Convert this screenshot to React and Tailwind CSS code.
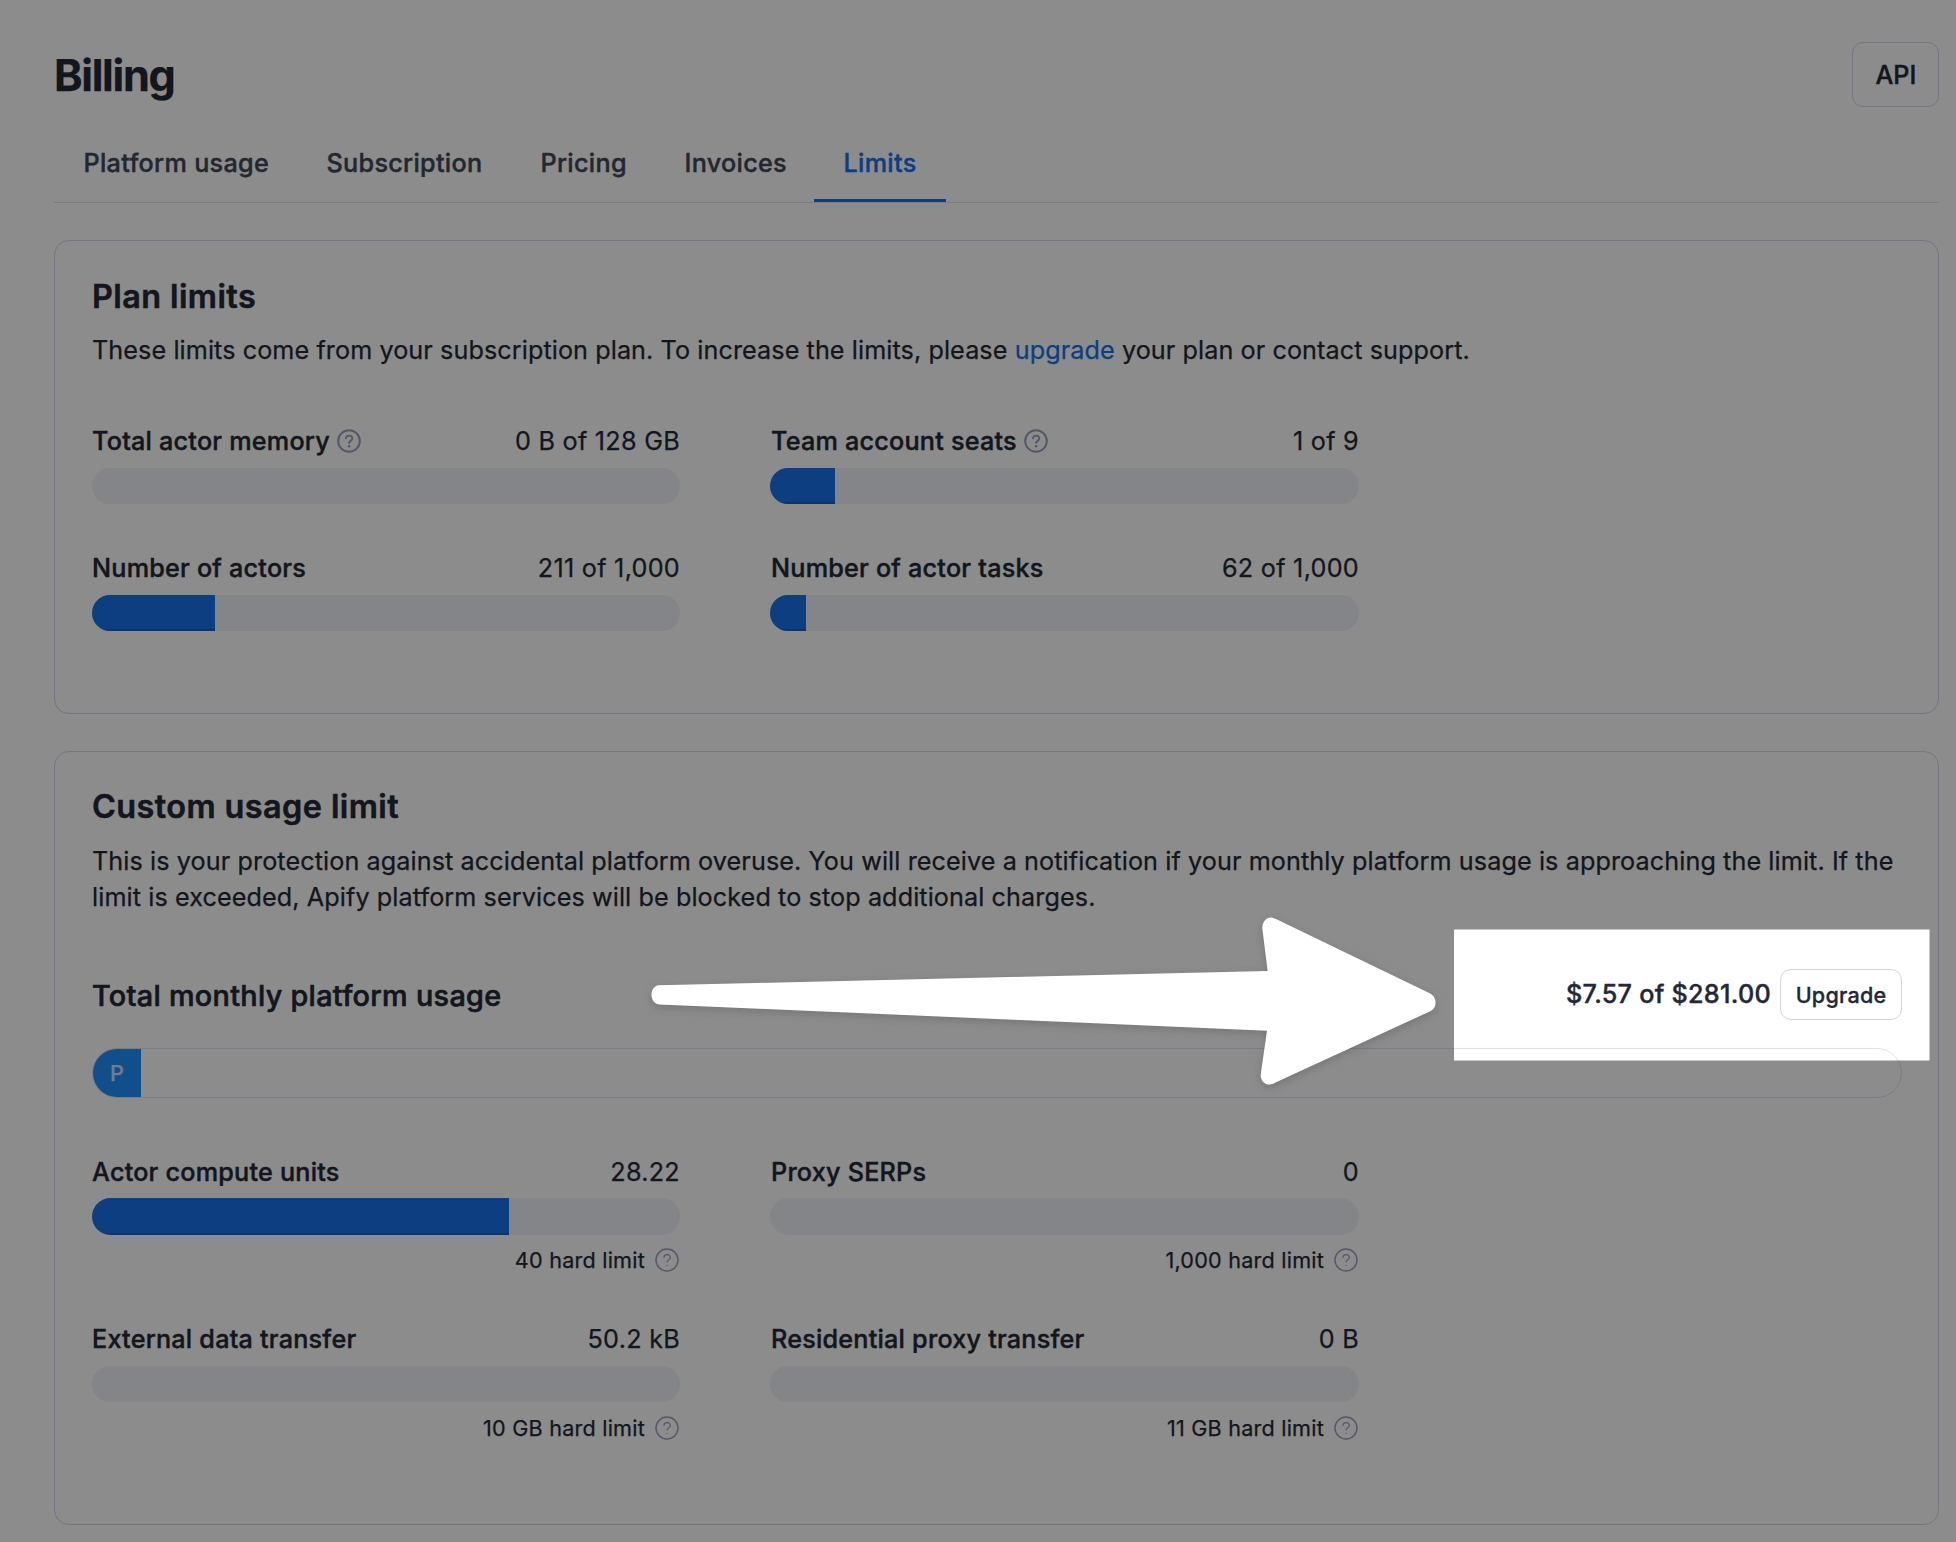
import React from "react";

const tabs = [
  { label: "Platform usage", width: "w-[243px]" },
  { label: "Subscription", width: "w-[214px]" },
  { label: "Pricing", width: "w-[144px]" },
  { label: "Invoices", width: "w-[159px]" },
  { label: "Limits", width: "w-[132px]", active: true },
];

function HelpIcon({ thin = false }) {
  return (
    <svg className="h-6 w-6 shrink-0" viewBox="0 0 24 24" fill="none" stroke="#979ebd" strokeLinecap="round">
      <circle cx="12" cy="12" r={thin ? 11 : 10.8} strokeWidth={thin ? 1.4 : 2} />
      <path
        d="M8.900 9.300c.3-1.700 1.600-2.700 3.200-2.700 1.800 0 3.200 1.100 3.200 2.900 0 2.200-3.200 2.500-3.200 4.500"
        strokeWidth={thin ? 1.2 : 1.9}
      />
      <circle cx="12.100" cy="17.300" r={thin ? 0.6 : 1.2} fill="#979ebd" stroke="none" />
    </svg>
  );
}

function Track({ fill = 0, height = "h-9" }) {
  return (
    <div className={`w-full overflow-hidden rounded-full bg-[#f0f2f9] ${height}`}>
      {fill > 0 && (
        <div className="h-full bg-[#1672eb] shadow-[inset_0_-2px_0_rgba(0,0,0,0.15)]" style={{ width: `${fill}px` }} />
      )}
    </div>
  );
}

function Meter({ label, value, help, fill, gap = "mt-[9px]", height, width, pad = "", limit, limitGap }) {
  return (
    <div className={width}>
      <div className={`flex h-9 items-center justify-between leading-9 ${pad}`}>
        <div className="flex items-center gap-[7px]">
          <span className="font-medium tracking-[0.22px] [-webkit-text-stroke:0.4px]">{label}</span>
          {help && <HelpIcon />}
        </div>
        <span className="tracking-[0.27px]">{value}</span>
      </div>
      <div className={gap}>
        <Track fill={fill} height={height} />
      </div>
      {limit && (
        <div className={`flex h-[30px] items-center justify-end gap-[10px] pr-px text-[21.6px] leading-[30px] tracking-[0.22px] ${limitGap}`}>
          <span>{limit}</span>
          <HelpIcon thin />
        </div>
      )}
    </div>
  );
}

function Card({ title, className, children }) {
  return (
    <section className={`rounded-[15px] border border-[#d5d3ec] pr-9 pl-[37px] ${className}`}>
      <h2 className="text-[32.4px] leading-[45px] font-semibold tracking-[0.42px] [-webkit-text-stroke:0.5px]">{title}</h2>
      {children}
    </section>
  );
}

const left = "w-[588px]";
const right = "ml-[90px] w-[589px]";

export default function App() {
  return (
    <div className="relative h-[1542px] w-[1956px] overflow-hidden bg-white pt-[42px] pr-[17px] pl-[54px] font-[Inter,sans-serif] text-[25.2px] text-[#242836] [-webkit-text-stroke:0.25px]">
      <header className="flex h-[65px] items-center justify-between">
        <h1 className="text-[43.2px] leading-[54px] font-bold tracking-[-1.3px]">Billing</h1>
        <button className="flex h-[65px] w-[87px] items-center justify-center rounded-[11px] border border-[#d5d3ec] pt-[2px] pl-px font-medium tracking-[0.1px] [-webkit-text-stroke:0.4px]">
          API
        </button>
      </header>

      <nav className="mt-[38px] flex h-[58px] border-b border-[#e0def2] leading-9 font-medium tracking-[0.3px] text-[#414758] [-webkit-text-stroke:0.4px]">
        {tabs.map((t) => (
          <div key={t.label} className={`${t.width} h-[57px] pl-[29.5px] ${t.active ? "border-b-[3px] border-[#1672eb] text-[#1672eb]" : ""}`}>
            {t.label}
          </div>
        ))}
      </nav>

      <Card title="Plan limits" className="mt-[37px] h-[474px] pt-[33px]">
        <p className="mt-[13px] leading-9 tracking-[0.08px]">
          These limits come from your subscription plan. To increase the limits, please{" "}
          <a className="text-[#1672eb]">upgrade</a> your plan or contact support.
        </p>
        <div className="mt-[55px] flex">
          <Meter width={left} label="Total actor memory" value="0 B of 128 GB" help />
          <Meter width={right} pad="pl-px" label="Team account seats" value="1 of 9" help fill={65} />
        </div>
        <div className="mt-[46px] flex">
          <Meter width={left} label="Number of actors" value="211 of 1,000" fill={123} />
          <Meter width={right} pad="pl-px" label="Number of actor tasks" value="62 of 1,000" fill={36} />
        </div>
      </Card>

      <Card title="Custom usage limit" className="mt-[37px] h-[774px] pt-8">
        <p className="mt-[14px] leading-9 tracking-[0.09px]">
          This is your protection against accidental platform overuse. You will receive a notification if your monthly
          platform usage is approaching the limit. If the
          <br />
          limit is exceeded, Apify platform services will be blocked to stop additional charges.
        </p>
        <div className="mt-[54px] flex h-[51px] items-center justify-between">
          <h3 className="pt-[3px] text-[28.8px] leading-10 font-medium tracking-[0.3px] [-webkit-text-stroke:0.6px]">
            Total monthly platform usage
          </h3>
          <div className="flex items-center gap-[9px]">
            <span className="pb-[2px] leading-9 font-medium tracking-[0.27px] [-webkit-text-stroke:0.4px]">
              $7.57 of $281.00
            </span>
            <button className="flex h-[51px] w-[122px] items-center justify-center rounded-[11px] border border-[#d0d4ea] pt-[2px] text-[21.6px] font-medium tracking-[0.2px] [-webkit-text-stroke:0.3px]">
              Upgrade
            </button>
          </div>
        </div>
        <div className="mt-7 h-[50px] overflow-hidden rounded-full border border-[#e0e3f4]">
          <div className="flex h-full w-12 items-center justify-center bg-[#1e8fff] pt-[2px] text-[21.6px] leading-none font-medium text-[#ffffffc4]">
            P
          </div>
        </div>
        <div className="mt-14 flex">
          <Meter width={left} label="Actor compute units" value="28.22" fill={417} gap="mt-2" height="h-[37px]" limit="40 hard limit" limitGap="mt-[10px]" />
          <Meter width={right} pad="pl-px" label="Proxy SERPs" value="0" gap="mt-2" height="h-[37px]" limit="1,000 hard limit" limitGap="mt-[10px]" />
        </div>
        <div className="mt-[46px] flex">
          <Meter width={left} label="External data transfer" value="50.2 kB" limit="10 GB hard limit" limitGap="mt-[11px]" />
          <Meter width={right} pad="pl-px" label="Residential proxy transfer" value="0 B" limit="11 GB hard limit" limitGap="mt-[11px]" />
        </div>
      </Card>

      {/* Dimmed backdrop with a highlighted window, and the arrow pointing at it */}
      <svg className="pointer-events-none absolute top-0 left-0 h-[1542px] w-[1956px]" viewBox="0 0 1956 1542">
        <path d="M0 0H1956V1542H0ZM1454 929.5V1060.500H1929.500V929.500Z" fill="#000" fillOpacity="0.45" fillRule="evenodd" />
        <path
          className="drop-shadow-[0_3px_4px_rgba(0,0,0,0.15)]"
          fill="#fff"
          d="M659 985.300L1267.600 971L1262.400 929C1261.800 920 1269 914.500 1276 919L1429.700 993.300C1437.400 997.300 1437.400 1007.300 1430.800 1011L1275.500 1082.500C1268 1087.500 1260 1082.500 1260.800 1074L1267 1030.700L659 1004.400C649 1003.500 649 986 659 985.300Z"
        />
      </svg>
    </div>
  );
}
